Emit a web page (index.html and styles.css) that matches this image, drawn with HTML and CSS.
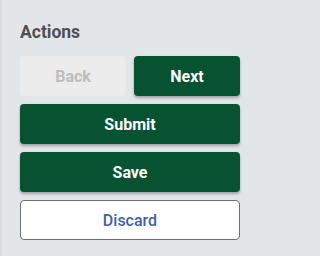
FILE: index.html
```html
<!DOCTYPE html>
<html>
<head>
<meta charset="utf-8">
<link rel="stylesheet" href="styles.css">
</head>
<body>
<div class="panel">
  <h2 class="title">Actions</h2>
  <div class="row">
    <button class="btn btn-disabled" disabled>Back</button>
    <button class="btn btn-primary">Next</button>
  </div>
  <button class="btn btn-primary">Submit</button>
  <button class="btn btn-primary">Save</button>
  <button class="btn btn-outline">Discard</button>
</div>
</body>
</html>
```
FILE: styles.css
```css
html, body {
  margin: 0;
  padding: 0;
  height: 100%;
}
body {
  background: #e3e6e9;
  font-family: Roboto, "Liberation Sans", sans-serif;
}
.panel {
  box-sizing: border-box;
  height: 100%;
  border-left: 2px solid #d8dbdf;
  padding: 20px 20px 0 18px;
  display: flex;
  flex-direction: column;
  gap: 8px;
  width: 260px;
}
.title {
  margin: 0 0 4px 0;
  font-size: 17.5px;
  font-weight: 700;
  color: #4f4f4f;
  line-height: 24px;
}
.row {
  display: flex;
  gap: 8px;
}
.row .btn {
  flex: 1;
}
.btn {
  box-sizing: border-box;
  height: 40px;
  border: none;
  border-radius: 4px;
  font-family: Roboto, "Liberation Sans", sans-serif;
  font-size: 16px;
  font-weight: 700;
  padding: 0;
  width: 100%;
}
.btn-primary {
  background: #065231;
  color: #ffffff;
  box-shadow: 0 2px 3px rgba(0, 0, 0, 0.3);
}
.btn-disabled {
  background: #ececec;
  color: #bdbdbd;
}
.btn-outline {
  background: #ffffff;
  border: 1px solid #6e6e6e;
  color: #4060a8;
  font-weight: 500;
}
```
